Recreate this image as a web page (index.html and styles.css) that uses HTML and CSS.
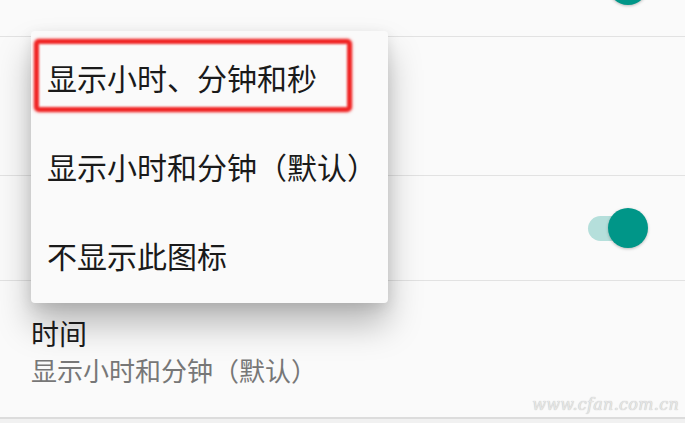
FILE: index.html
```html
<!DOCTYPE html>
<html lang="zh-CN">
<head>
<meta charset="utf-8">
<title>状态栏时间设置</title>
<link rel="stylesheet" href="styles.css">
</head>
<body>
<div class="screen">
  <div class="list">
    <div class="row row-top">
      <span class="switch"><span class="track"></span><span class="thumb"></span></span>
    </div>
    <div class="row row-two"></div>
    <div class="row row-switch">
      <span class="switch"><span class="track"></span><span class="thumb"></span></span>
    </div>
    <div class="row row-time">
      <div class="title">时间</div>
      <div class="subtitle">显示小时和分钟（默认）</div>
      <div class="watermark">www.cfan.com.cn</div>
    </div>
  </div>
  <div class="footer"></div>

  <div class="menu">
    <div class="menu-item selected">显示小时、分钟和秒<span class="highlight"></span></div>
    <div class="menu-item">显示小时和分钟（默认）</div>
    <div class="menu-item">不显示此图标</div>
  </div>
</div>
</body>
</html>
```

FILE: styles.css
```css
html, body {
  margin: 0;
  padding: 0;
  background: #fafafa;
  overflow: hidden;
}

.screen {
  position: relative;
  width: 685px;
  height: 423px;
  overflow: hidden;
  font-family: "Noto Sans CJK SC", "Noto Sans", sans-serif;
}

.list {
  display: flex;
  flex-direction: column;
  margin-top: -67px;
}

.row {
  position: relative;
  display: flex;
  align-items: center;
  border-bottom: 1px solid #e2e2e2;
  box-sizing: border-box;
}

.row-top { height: 104px; justify-content: flex-end; padding-right: 37px; }
.row-two { height: 139px; }
.row-switch { height: 105px; justify-content: flex-end; padding-right: 37px; }

.row-time {
  height: 138px;
  flex-direction: column;
  align-items: flex-start;
  padding: 34px 0 0 31px;
  border-bottom: 2px solid #dcdcdc;
}

.title {
  font-size: 28px;
  line-height: 36px;
  color: #1c1c1c;
}

.subtitle {
  font-size: 26px;
  line-height: 38px;
  color: #777777;
}

.watermark {
  position: absolute;
  right: 6px;
  bottom: 3px;
  font-family: "DejaVu Serif", serif;
  font-style: italic;
  font-size: 16px;
  letter-spacing: 0.3px;
  color: #e6e6e6;
  text-shadow: 0 0 1px #b0b0b0;
}

.footer {
  height: 20px;
  background: #f1f1f1;
}

.switch {
  position: relative;
  display: flex;
  align-items: center;
  width: 60px;
  height: 40px;
}

.track {
  width: 50px;
  height: 25px;
  border-radius: 13px;
  background: #b5dfdb;
}

.thumb {
  position: absolute;
  right: 0;
  top: 0;
  width: 40px;
  height: 40px;
  border-radius: 50%;
  background: #009688;
  box-shadow: 0 1px 3px rgba(0, 0, 0, 0.25);
}

.menu {
  position: absolute;
  left: 31px;
  top: 31px;
  width: 357px;
  padding: 1px 0 4px;
  background: #fafafa;
  border-radius: 4px;
  box-shadow: 0 22px 34px rgba(0, 0, 0, 0.26), 0 4px 14px rgba(0, 0, 0, 0.1);
  z-index: 2;
}

.menu-item {
  position: relative;
  height: 89px;
  display: flex;
  align-items: center;
  padding-left: 16px;
  font-size: 30px;
  color: #1a1a1a;
  white-space: nowrap;
}

.highlight {
  position: absolute;
  left: 3px;
  top: 7px;
  width: 308px;
  height: 63px;
  border: 5px solid #f02626;
  border-radius: 5px;
  filter: blur(0.8px);
  box-shadow: 0 0 3px rgba(240, 38, 38, 0.6);
}
```
